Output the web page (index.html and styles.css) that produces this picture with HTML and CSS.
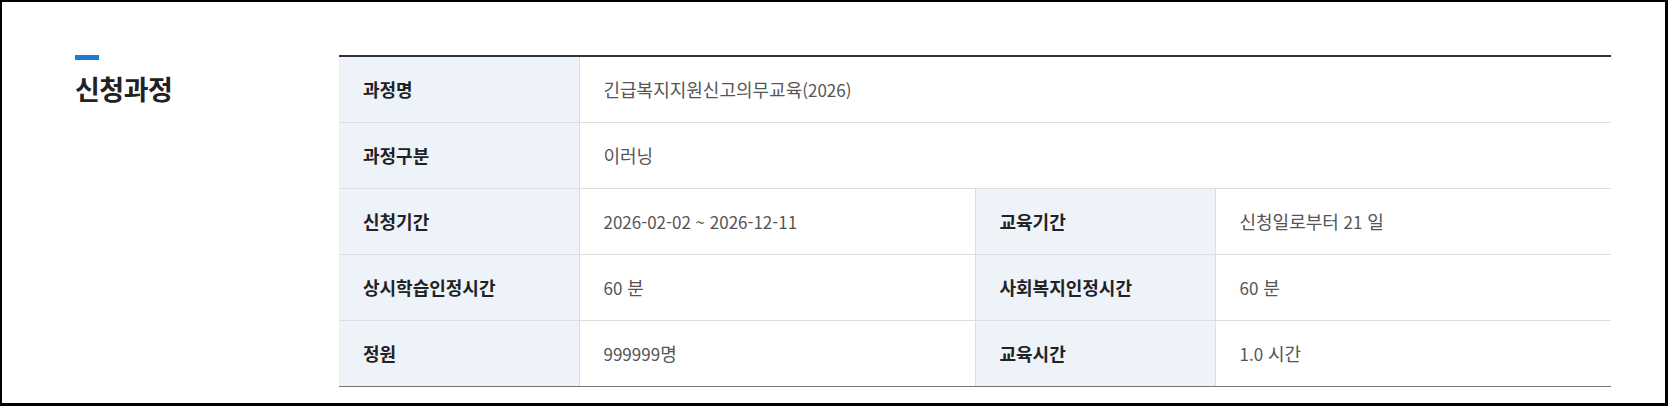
FILE: index.html
```html
<!DOCTYPE html>
<html lang="ko">
<head>
<meta charset="utf-8">
<title>신청과정</title>
<link rel="stylesheet" href="styles.css">
</head>
<body>
<div class="frame">
  <section class="section">
    <div class="section-head">
      <span class="head-bar"></span>
      <h2 class="head-title">신청과정</h2>
    </div>
    <table class="info-table">
      <colgroup>
        <col class="col-label">
        <col class="col-value">
        <col class="col-label">
        <col class="col-value">
      </colgroup>
      <tbody>
        <tr>
          <th>과정명</th>
          <td colspan="3">긴급복지지원신고의무교육<span class="num">(2026)</span></td>
        </tr>
        <tr>
          <th>과정구분</th>
          <td colspan="3">이러닝</td>
        </tr>
        <tr>
          <th>신청기간</th>
          <td><span class="num">2026-02-02 ~ 2026-12-11</span></td>
          <th>교육기간</th>
          <td>신청일로부터<span class="num"> 21 </span>일</td>
        </tr>
        <tr>
          <th>상시학습인정시간</th>
          <td><span class="num">60 </span>분</td>
          <th>사회복지인정시간</th>
          <td><span class="num">60 </span>분</td>
        </tr>
        <tr>
          <th>정원</th>
          <td><span class="num">999999</span>명</td>
          <th>교육시간</th>
          <td><span class="num">1.0 </span>시간</td>
        </tr>
      </tbody>
    </table>
  </section>
</div>
</body>
</html>
```

FILE: styles.css
```css
* { box-sizing: border-box; }
html, body { margin: 0; padding: 0; }
body {
  background: #fff;
  font-family: "Noto Sans CJK KR", "Noto Sans", sans-serif;
  color: #333;
}
.frame {
  width: 1668px;
  height: 406px;
  border-style: solid;
  border-color: #000;
  border-width: 2px 3px 3px 2px;
  overflow: hidden;
}
.section {
  display: flex;
  align-items: flex-start;
  padding: 53px 0 0 73px;
}
.section-head {
  width: 264px;
  flex: none;
  display: flex;
  flex-direction: column;
}
.head-bar {
  display: block;
  width: 24px;
  height: 5px;
  background: #1a7bd0;
}
.head-title {
  margin: 12px 0 0;
  font-size: 27px;
  line-height: 34px;
  font-weight: 700;
  letter-spacing: -0.5px;
  color: #222;
}
.info-table {
  width: 1272px;
  border-collapse: collapse;
  table-layout: fixed;
  border-top: 2px solid #333;
  border-bottom: 1px solid #777;
}
.col-label { width: 240px; }
.col-value { width: 396px; }
.info-table th,
.info-table td {
  height: 66px;
  padding: 0 24px;
  border-bottom: 1px solid #ddd;
  text-align: left;
  vertical-align: middle;
}
.info-table tr:last-child th,
.info-table tr:last-child td { border-bottom: 1px solid #777; }
.info-table th {
  background: #eef3fa;
  font-size: 18px;
  font-weight: 700;
  color: #222;
  border-right: 1px solid #ddd;
}
.info-table td {
  font-size: 18px;
  font-weight: 400;
  color: #555;
  border-right: 1px solid #ddd;
}
.info-table td:last-child { border-right: 0; }
.num { font-size: 17px; }
```
